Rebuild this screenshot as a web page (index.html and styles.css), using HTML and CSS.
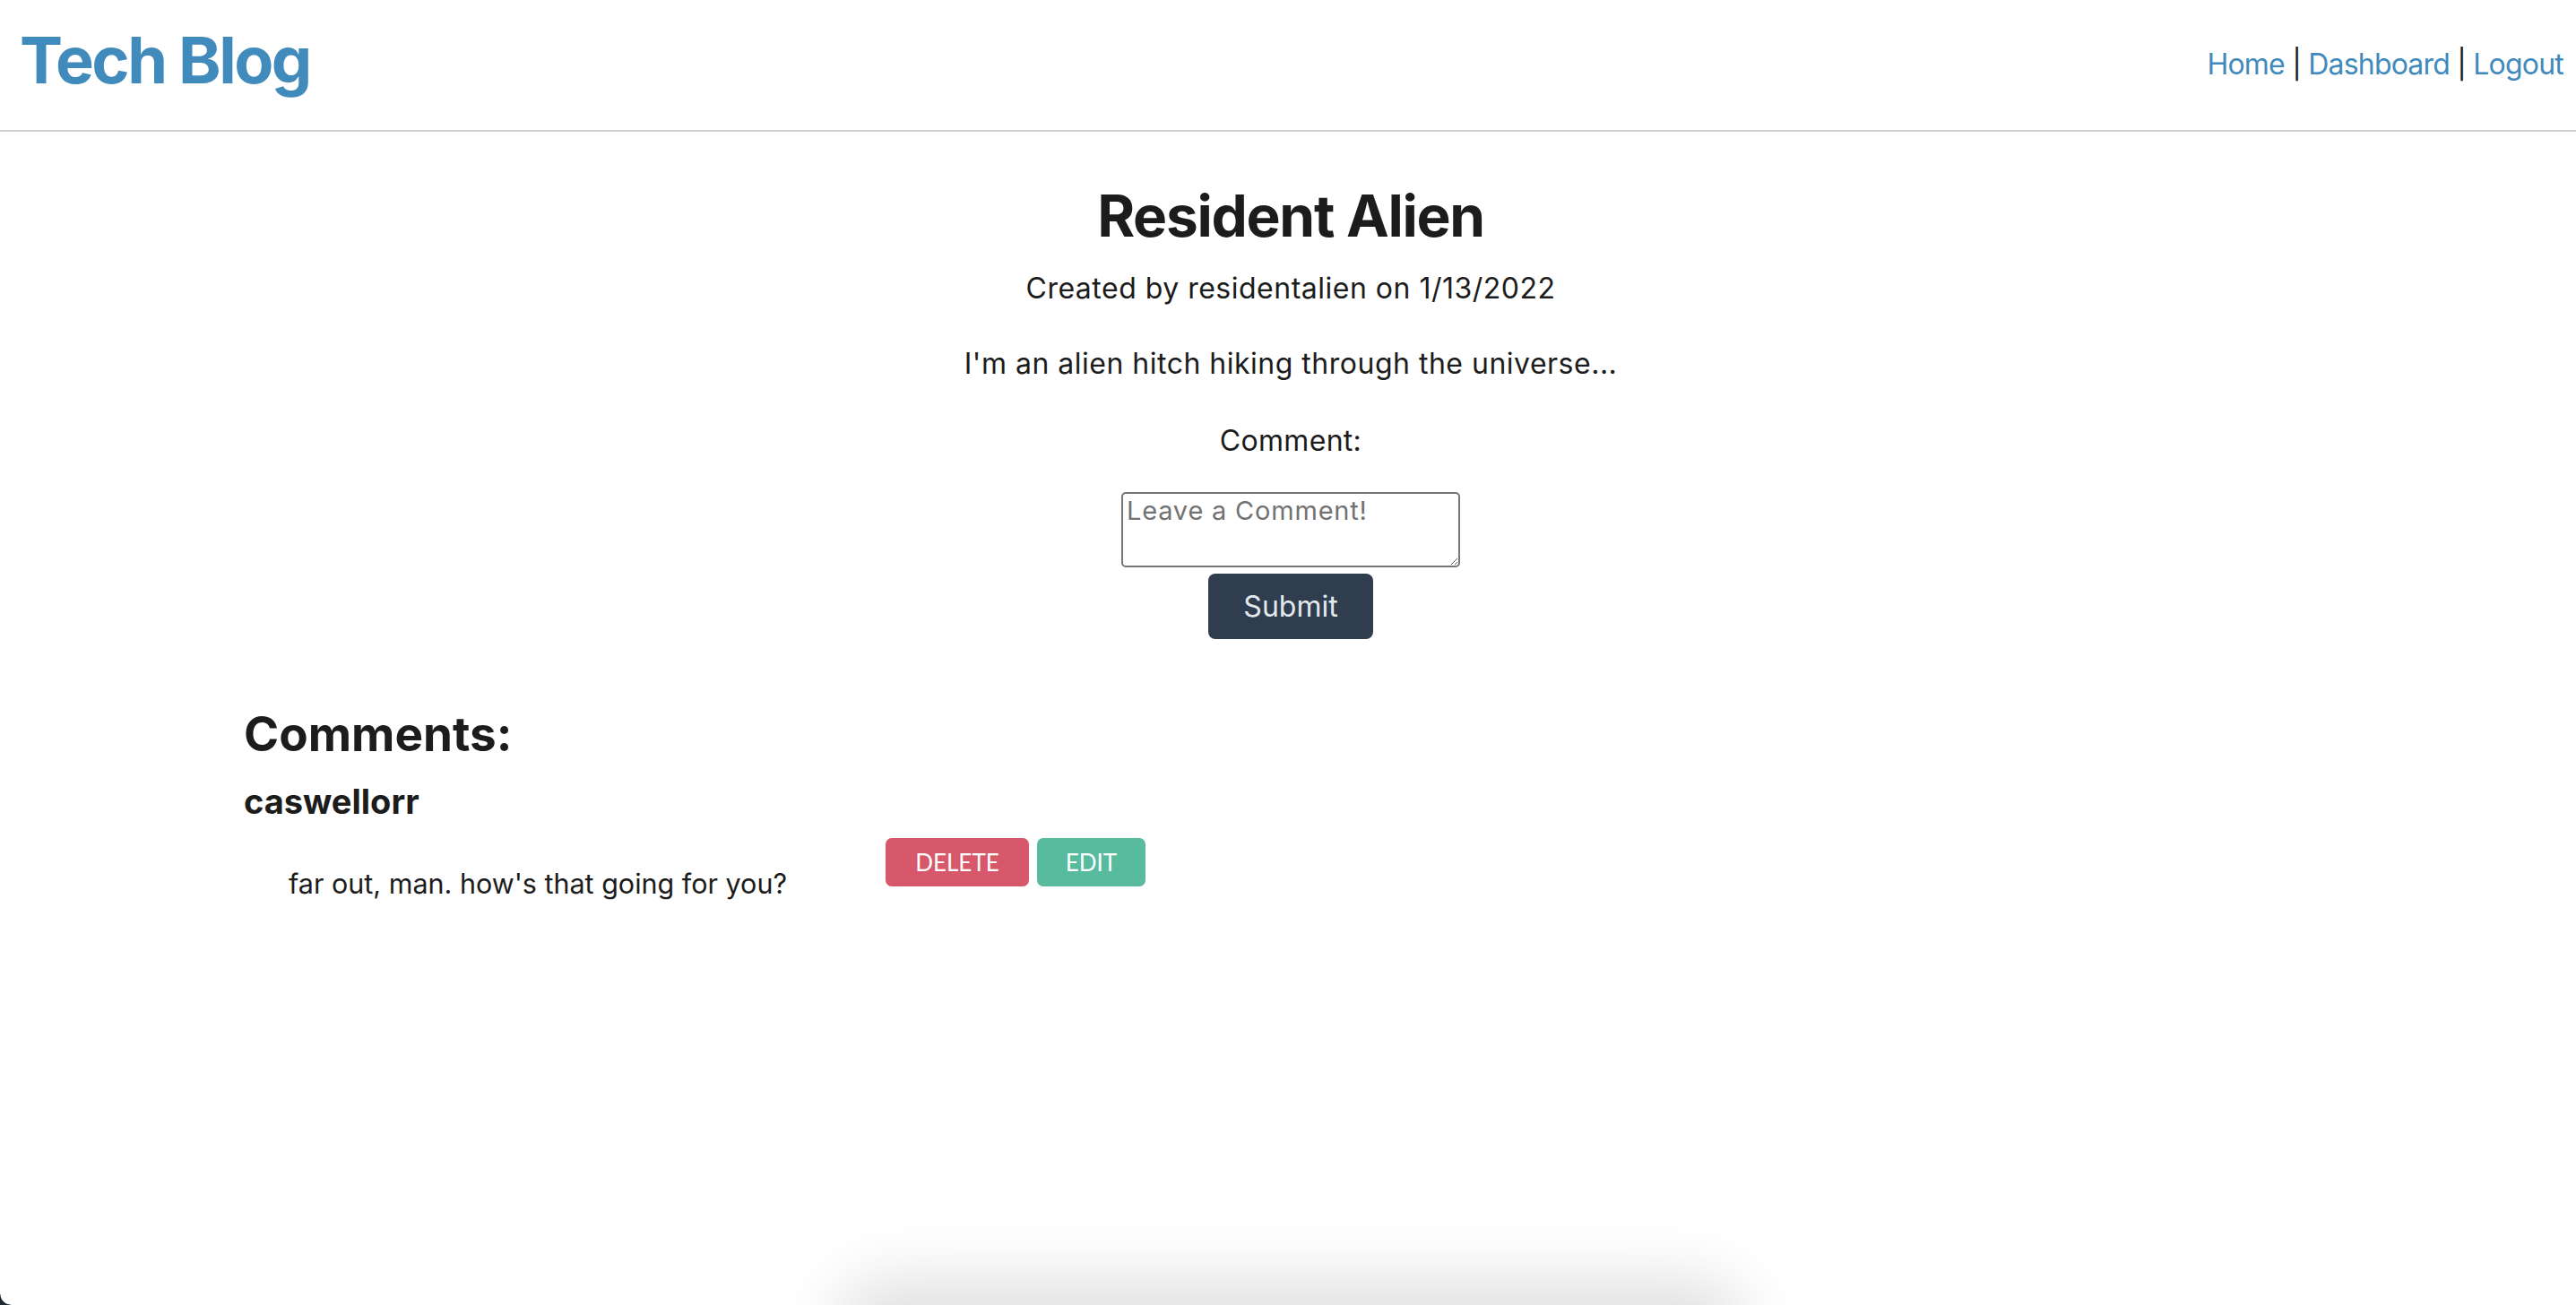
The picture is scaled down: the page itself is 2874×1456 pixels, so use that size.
FILE: index.html
```html
<!DOCTYPE html>
<html lang="en">
<head>
<meta charset="utf-8">
<title>Tech Blog</title>
<link rel="stylesheet" href="styles.css">
</head>
<body>
<header class="site-header">
  <a class="logo" href="#">Tech Blog</a>
  <nav class="nav">
    <a href="#">Home</a> | <a href="#">Dashboard</a> | <a href="#">Logout</a>
  </nav>
</header>
<main class="main">
  <section class="post">
    <h1 class="post-title">Resident Alien</h1>
    <p class="post-meta">Created by residentalien on 1/13/2022</p>
    <p class="post-body">I'm an alien hitch hiking through the universe...</p>
    <form class="comment-form">
      <label class="comment-label" for="comment">Comment:</label>
      <textarea id="comment" class="comment-input" placeholder="Leave a Comment!"></textarea>
      <button type="button" class="submit-btn">Submit</button>
    </form>
  </section>
  <section class="comments">
    <h2 class="comments-title">Comments:</h2>
    <div class="comment">
      <h3 class="comment-user">caswellorr</h3>
      <div class="comment-row">
        <p class="comment-text">far out, man. how's that going for you?</p>
        <div class="comment-actions">
          <button type="button" class="btn btn-delete">DELETE</button>
          <button type="button" class="btn btn-edit">EDIT</button>
        </div>
      </div>
    </div>
  </section>
</main>
<div class="dock-shadow"></div>
<div class="corner"></div>
</body>
</html>
```

FILE: styles.css
```css
html, body {
  margin: 0;
  padding: 0;
  background: #ffffff;
}
body {
  font-family: Inter, "Noto Sans", sans-serif;
  color: #1c1c1c;
  min-height: 1456px;
  overflow: hidden;
  position: relative;
}
.site-header {
  height: 145px;
  border-bottom: 2px solid #cfcfcf;
  display: flex;
  justify-content: space-between;
  align-items: flex-start;
  padding: 0 14px 0 22px;
}
.logo {
  font-size: 72px;
  font-weight: 700;
  line-height: 1.2;
  color: #418abc;
  text-decoration: none;
  margin-top: 24px;
  letter-spacing: -2.5px;
}
.nav {
  margin-top: 53px;
  font-size: 32px;
  line-height: 1.2;
  color: #1c1c1c;
  letter-spacing: -0.8px;
}
.nav a {
  color: #418abc;
  text-decoration: none;
}
.main {
  display: flex;
  flex-direction: column;
}
.post {
  display: flex;
  flex-direction: column;
  align-items: center;
  text-align: center;
  padding-left: 6px;
}
.post-title {
  font-size: 64px;
  line-height: 1.2;
  font-weight: 700;
  margin: 56px 0 0;
  letter-spacing: -1.3px;
}
.post-meta {
  font-size: 32px;
  line-height: 1.2;
  margin: 23px 0 0;
  letter-spacing: 0.5px;
}
.post-body {
  font-size: 32px;
  line-height: 1.2;
  margin: 46px 0 0;
  letter-spacing: 0.5px;
}
.comment-form {
  display: flex;
  flex-direction: column;
  align-items: center;
  margin-top: 47px;
}
.comment-label {
  font-size: 32px;
  line-height: 1.2;
  letter-spacing: 0.3px;
}
.comment-input {
  margin-top: 38px;
  width: 378px;
  height: 84px;
  box-sizing: border-box;
  border: 2px solid #767676;
  border-radius: 5px;
  padding: 2px 4px;
  font-family: Inter, "Noto Sans", sans-serif;
  font-size: 29px;
  letter-spacing: 0.8px;
  line-height: 1.2;
  color: #1c1c1c;
  resize: both;
}
.comment-input::placeholder {
  color: #727272;
}
.submit-btn {
  margin-top: 7px;
  width: 184px;
  height: 73px;
  border: none;
  border-radius: 8px;
  background: #2f3d4e;
  color: #e2eaee;
  font-family: Inter, "Noto Sans", sans-serif;
  font-size: 32px;
  padding: 0;
}
.comments {
  padding-left: 272px;
  margin-top: 75px;
}
.comments-title {
  font-size: 53px;
  line-height: 1.2;
  font-weight: 700;
  margin: 0;
}
.comment-user {
  font-size: 38px;
  line-height: 1.2;
  font-weight: 700;
  margin: 20px 0 0;
}
.comment-row {
  display: flex;
  align-items: flex-start;
  margin-top: 18px;
}
.comment-text {
  font-size: 30.5px;
  line-height: 1.2;
  margin: 33px 0 0 50px;
  width: 666px;
}
.comment-actions {
  display: flex;
  gap: 9px;
}
.btn {
  height: 54px;
  border: none;
  border-radius: 7px;
  color: #ffffff;
  font-family: Lato, "Noto Sans", sans-serif;
  font-size: 26px;
  padding: 0;
}
.btn-delete {
  width: 160px;
  background: #d6586a;
}
.btn-edit {
  width: 121px;
  background: #58bb9e;
}
.dock-shadow {
  position: absolute;
  left: 960px;
  width: 960px;
  bottom: -60px;
  height: 60px;
  border-radius: 40px;
  box-shadow: 0 0 70px 30px rgba(0, 0, 0, 0.12);
}
.corner {
  position: absolute;
  left: 0;
  bottom: 0;
  width: 12px;
  height: 12px;
  background: radial-gradient(circle at 12px 0, transparent 11px, #1a2a30 12px);
}
```
